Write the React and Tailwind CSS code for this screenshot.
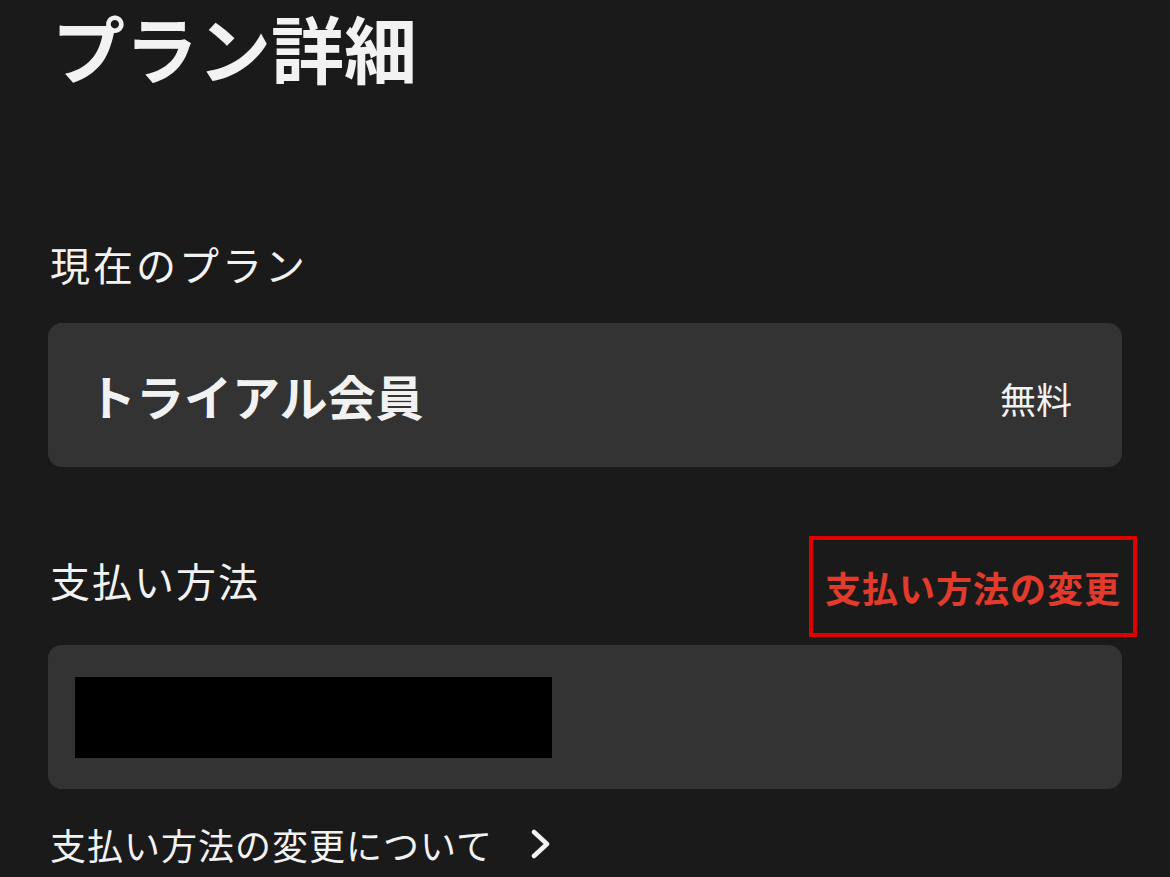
import React from "react";

const font = { fontFamily: '"Noto Sans CJK JP", "Noto Sans", sans-serif' };

export default function App() {
  return (
    <div className="w-[1170px] h-[877px] overflow-hidden bg-[#1a1a1a] text-[#f2f2f2]" style={font}>
      <div className="px-[48px]">
        <h1 className="pl-[4px] pt-[10px] text-[73px] leading-none font-bold">プラン詳細</h1>

        <div className="mt-[153px] pl-[2px] text-[40px] leading-[56px] tracking-[3px]">現在のプラン</div>
        <div className="mt-[31px] h-[144px] rounded-[14px] bg-[#333333] flex items-center justify-between pl-[40px] pr-[50px]">
          <span className="text-[48px] font-bold">トライアル会員</span>
          <span className="text-[36px] pt-[6px]">無料</span>
        </div>

        <div className="mt-[69px] flex items-start justify-between">
          <span className="pl-[2px] text-[40px] leading-[56px] tracking-[2px] mt-[16px]">支払い方法</span>
          <span className="-mr-[15px] w-[328px] h-[101px] border-[4px] border-[#e00000] flex items-center justify-center text-[36px] font-bold text-[#e23b2c] tracking-[1px]">
            支払い方法の変更
          </span>
        </div>
        <div className="mt-[8px] h-[144px] rounded-[14px] bg-[#333333] pl-[27px] pt-[32px]">
          <div className="w-[477px] h-[81px] bg-black" />
        </div>

        <div className="mt-[30px] pl-[2px] flex items-center gap-[36px]">
          <span className="text-[36px] leading-[50px] tracking-[1px]">支払い方法の変更について</span>
          <svg width="24" height="30" viewBox="0 0 24 30" fill="none" stroke="#f2f2f2" strokeWidth="4.5" strokeLinecap="round" strokeLinejoin="round">
            <path d="M5 3 L18 15 L5 27" />
          </svg>
        </div>
      </div>
    </div>
  );
}
